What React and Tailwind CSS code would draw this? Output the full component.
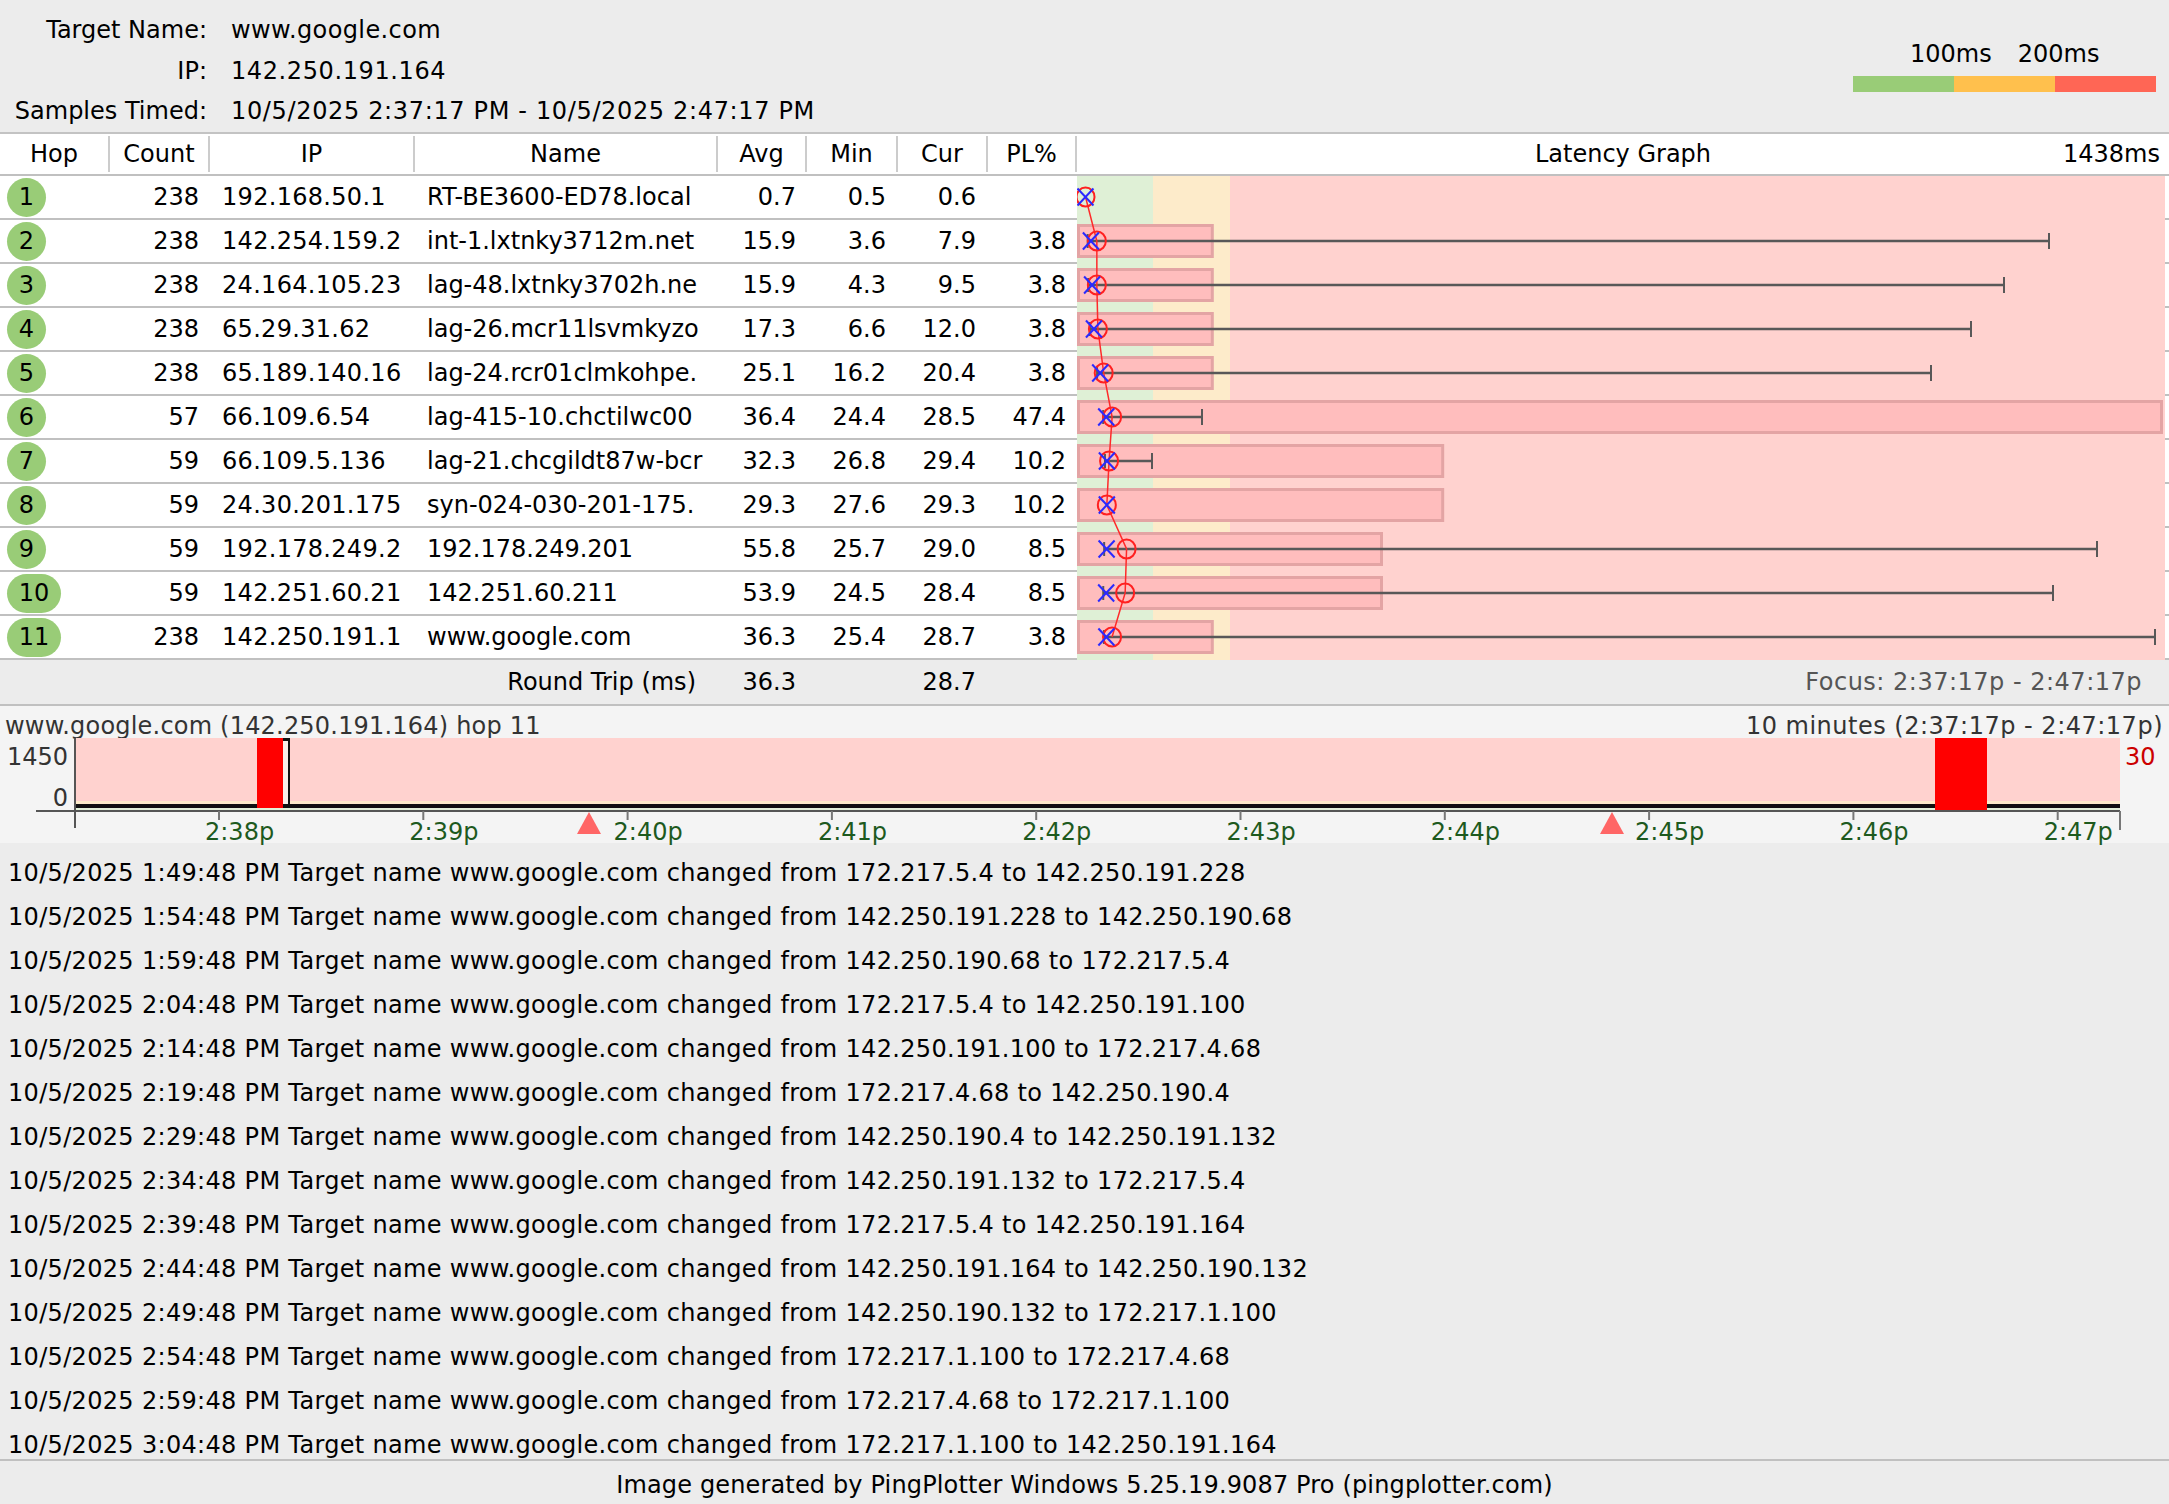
import React from 'react';

const hops = [
  { hop: 1, count: 238, ip: '192.168.50.1', name: 'RT-BE3600-ED78.local', avg: 0.7, min: 0.5, cur: 0.6, pl: null, maxX: null },
  { hop: 2, count: 238, ip: '142.254.159.2', name: 'int-1.lxtnky3712m.net', avg: 15.9, min: 3.6, cur: 7.9, pl: 3.8, maxX: 972 },
  { hop: 3, count: 238, ip: '24.164.105.23', name: 'lag-48.lxtnky3702h.ne', avg: 15.9, min: 4.3, cur: 9.5, pl: 3.8, maxX: 927 },
  { hop: 4, count: 238, ip: '65.29.31.62', name: 'lag-26.mcr11lsvmkyzo', avg: 17.3, min: 6.6, cur: 12.0, pl: 3.8, maxX: 894 },
  { hop: 5, count: 238, ip: '65.189.140.16', name: 'lag-24.rcr01clmkohpe.', avg: 25.1, min: 16.2, cur: 20.4, pl: 3.8, maxX: 854 },
  { hop: 6, count: 57, ip: '66.109.6.54', name: 'lag-415-10.chctilwc00', avg: 36.4, min: 24.4, cur: 28.5, pl: 47.4, maxX: 125 },
  { hop: 7, count: 59, ip: '66.109.5.136', name: 'lag-21.chcgildt87w-bcr', avg: 32.3, min: 26.8, cur: 29.4, pl: 10.2, maxX: 75 },
  { hop: 8, count: 59, ip: '24.30.201.175', name: 'syn-024-030-201-175.', avg: 29.3, min: 27.6, cur: 29.3, pl: 10.2, maxX: null },
  { hop: 9, count: 59, ip: '192.178.249.2', name: '192.178.249.201', avg: 55.8, min: 25.7, cur: 29.0, pl: 8.5, maxX: 1020 },
  { hop: 10, count: 59, ip: '142.251.60.21', name: '142.251.60.211', avg: 53.9, min: 24.5, cur: 28.4, pl: 8.5, maxX: 976 },
  { hop: 11, count: 238, ip: '142.250.191.1', name: 'www.google.com', avg: 36.3, min: 25.4, cur: 28.7, pl: 3.8, maxX: 1078 },
];

const log = [
  ['1:49:48', '172.217.5.4', '142.250.191.228'],
  ['1:54:48', '142.250.191.228', '142.250.190.68'],
  ['1:59:48', '142.250.190.68', '172.217.5.4'],
  ['2:04:48', '172.217.5.4', '142.250.191.100'],
  ['2:14:48', '142.250.191.100', '172.217.4.68'],
  ['2:19:48', '172.217.4.68', '142.250.190.4'],
  ['2:29:48', '142.250.190.4', '142.250.191.132'],
  ['2:34:48', '142.250.191.132', '172.217.5.4'],
  ['2:39:48', '172.217.5.4', '142.250.191.164'],
  ['2:44:48', '142.250.191.164', '142.250.190.132'],
  ['2:49:48', '142.250.190.132', '172.217.1.100'],
  ['2:54:48', '172.217.1.100', '172.217.4.68'],
  ['2:59:48', '172.217.4.68', '172.217.1.100'],
  ['3:04:48', '172.217.1.100', '142.250.191.164'],
];

const cols = 'grid grid-cols-[110px_100px_205px_303px_89px_91px_90px_89px]';
const msX = (ms) => 8 + 0.745 * ms;

const LatencyGraph = () => {
  const pts = hops.map((h, i) => `${msX(h.avg)},${21 + 44 * i}`).join(' ');
  return (
    <svg width="1092" height="484" className="block shrink-0">
      <rect x="0" y="0" width="76" height="484" fill="#dff0d6" />
      <rect x="76" y="0" width="77" height="484" fill="#fdebca" />
      <rect x="153" y="0" width="935" height="484" fill="#ffd2cf" />
      <rect x="1088" y="0" width="4" height="484" fill="#ffffff" />
      {hops.map((h, i) => (
        <rect key={'t' + i} x="1088" y={42 + 44 * i} width="4" height="2" fill="#c0c0c0" />
      ))}
      {hops.map((h, i) => {
        const cy = 21 + 44 * i;
        return (
          <g key={'b' + i}>
            {h.pl && (
              <rect x="1.5" y={cy - 15.5} width={Math.min(36 * h.pl, 1086) - 3} height="31" fill="#ffbdbd" stroke="#e3a4a4" strokeWidth="3" />
            )}
            {h.maxX && (
              <>
                <line x1={msX(h.min)} y1={cy} x2={h.maxX} y2={cy} stroke="#585858" strokeWidth="2.5" />
                <line x1={h.maxX} y1={cy - 8} x2={h.maxX} y2={cy + 8} stroke="#585858" strokeWidth="2" />
                <line x1={msX(h.min)} y1={cy - 7} x2={msX(h.min)} y2={cy + 7} stroke="#585858" strokeWidth="2" />
              </>
            )}
          </g>
        );
      })}
      <polyline points={pts} fill="none" stroke="#ff2a2a" strokeWidth="1.5" />
      {hops.map((h, i) => {
        const cy = 21 + 44 * i;
        const ax = msX(h.avg);
        const cx = msX(h.cur);
        return (
          <g key={'m' + i}>
            <ellipse cx={ax} cy={cy} rx="9" ry="9.5" fill="none" stroke="#ff2020" strokeWidth="2" />
            <line x1={cx - 8} y1={cy - 8.5} x2={cx + 8} y2={cy + 8.5} stroke="#2a2aff" strokeWidth="2" />
            <line x1={cx + 8} y1={cy - 8.5} x2={cx - 8} y2={cy + 8.5} stroke="#2a2aff" strokeWidth="2" />
          </g>
        );
      })}
    </svg>
  );
};

const TimelineGraph = () => {
  const ticks = ['2:38p', '2:39p', '2:40p', '2:41p', '2:42p', '2:43p', '2:44p', '2:45p', '2:46p', '2:47p'];
  return (
    <svg width="2169" height="105" className="block overflow-visible">
      <rect x="75" y="0" width="2045" height="63" fill="#ffd2cf" />
      <rect x="75" y="63" width="2045" height="5" fill="#fdebca" />
      <rect x="75" y="68" width="2045" height="5" fill="#e2f1d9" />
      <rect x="75" y="66" width="2045" height="4" fill="#111111" />
      <rect x="257" y="0" width="26" height="70" fill="#ff0000" />
      <rect x="283" y="3" width="6" height="63" fill="#f8efe9" />
      <rect x="283" y="0" width="7" height="3" fill="#111111" />
      <rect x="288" y="0" width="2" height="68" fill="#111111" />
      <rect x="1935" y="0" width="52" height="72" fill="#ff0000" />
      <line x1="36" y1="73" x2="2120" y2="73" stroke="#555555" strokeWidth="2" />
      <line x1="75" y1="0" x2="75" y2="90" stroke="#555555" strokeWidth="2" />
      <line x1="2120" y1="73" x2="2120" y2="92" stroke="#777777" strokeWidth="2" />
      {ticks.map((t, i) => {
        const x = 219 + 204.3 * i;
        return (
          <g key={t}>
            <line x1={x} y1="73" x2={x} y2="82" stroke="#777777" strokeWidth="2" />
            <text x={x - 14} y="102" fontSize="24" fill="#1e5a1e" fontFamily="DejaVu Sans, sans-serif">{t}</text>
          </g>
        );
      })}
      <polygon points="577,96 589,74 601,96" fill="#ff6666" />
      <polygon points="1600,96 1612,74 1624,96" fill="#ff6666" />
      <text x="68" y="26.5" fontSize="24" textAnchor="end" fill="#333333" fontFamily="DejaVu Sans, sans-serif">1450</text>
      <text x="68" y="67.5" fontSize="24" textAnchor="end" fill="#333333" fontFamily="DejaVu Sans, sans-serif">0</text>
      <text x="2125" y="26.5" fontSize="24" fill="#cc0000" fontFamily="DejaVu Sans, sans-serif">30</text>
    </svg>
  );
};

const App = () => {
  return (
    <div className="w-[2169px] h-[1504px] overflow-hidden bg-[#ececec] text-black text-[24px] [font-family:'DejaVu_Sans',sans-serif]">
      {/* target info + legend */}
      <div className="h-[134px] flex justify-between border-b-2 border-[#c3c3c3]">
        <div className="grid grid-cols-[207px_auto] gap-x-[24px] pt-[10px] leading-[40px] whitespace-nowrap">
          <div className="text-right">Target Name:</div>
          <div className="tracking-[0.4px]">www.google.com</div>
          <div className="text-right">IP:</div>
          <div className="tracking-[0.6px]">142.250.191.164</div>
          <div className="text-right">Samples Timed:</div>
          <div className="tracking-[0.65px]">10/5/2025 2:37:17 PM - 10/5/2025 2:47:17 PM</div>
        </div>
        <div className="w-[303px] mr-[13px] pt-[40px]">
          <div className="flex gap-[26px] pl-[57px] h-[28px] leading-[28px]">
            <span>100ms</span>
            <span>200ms</span>
          </div>
          <div className="flex mt-[8px] h-[16px]">
            <div className="flex-1 bg-[#99cc77]" />
            <div className="flex-1 bg-[#ffc04d]" />
            <div className="flex-1 bg-[#ff6655]" />
          </div>
        </div>
      </div>

      {/* column headers */}
      <div className="grid grid-cols-[110px_100px_205px_303px_89px_91px_90px_89px_1fr] h-[42px] bg-white border-b-2 border-[#c0c0c0] items-center">
        {['Hop', 'Count', 'IP', 'Name', 'Avg', 'Min', 'Cur', 'PL%'].map((c) => (
          <div key={c} className="h-[36px] flex items-center justify-center border-r-2 border-[#cccccc]">{c}</div>
        ))}
        <div className="grid grid-cols-[1fr_auto_1fr] items-center">
          <div />
          <div>Latency Graph</div>
          <div className="text-right pr-[9px]">1438ms</div>
        </div>
      </div>

      {/* hop rows + latency graph */}
      <div className="flex bg-white">
        <div className="w-[1077px] shrink-0">
          {hops.map((h) => (
            <div key={h.hop} className={`${cols} h-[44px] border-b-2 border-[#c0c0c0] items-center whitespace-nowrap`}>
              <div className="pl-[7px]">
                <div className={`${h.hop >= 10 ? 'w-[54px]' : 'w-[39px]'} h-[39px] rounded-full bg-[#99cc77] flex items-center justify-center`}>
                  {h.hop}
                </div>
              </div>
              <div className="text-right pr-[11px]">{h.count}</div>
              <div className="pl-[12px] overflow-hidden tracking-[0.3px]">{h.ip}</div>
              <div className="pl-[12px] overflow-hidden">{h.name}</div>
              <div className="text-right pr-[11px]">{h.avg.toFixed(1)}</div>
              <div className="text-right pr-[12px]">{h.min.toFixed(1)}</div>
              <div className="text-right pr-[12px]">{h.cur.toFixed(1)}</div>
              <div className="text-right pr-[11px]">{h.pl ? h.pl.toFixed(1) : ''}</div>
            </div>
          ))}
        </div>
        <LatencyGraph />
      </div>

      {/* round trip */}
      <div className="flex h-[46px] border-b-2 border-[#c0c0c0] items-center whitespace-nowrap">
        <div className="grid grid-cols-[718px_89px_91px_90px_89px] w-[1077px] shrink-0">
          <div className="text-right pr-[22px]">Round Trip (ms)</div>
          <div className="text-right pr-[11px]">36.3</div>
          <div />
          <div className="text-right pr-[12px]">28.7</div>
          <div />
        </div>
        <div className="flex-1 text-right pr-[27px] text-[#555555] tracking-[0.5px]">Focus: 2:37:17p - 2:47:17p</div>
      </div>

      {/* timeline for final hop */}
      <div className="h-[137px] bg-[#f4f4f4]">
        <div className="flex justify-between h-[32px] pt-[6px] leading-[28px] pl-[5px] pr-[6px] text-[#333333] whitespace-nowrap">
          <span className="tracking-[0.2px]">www.google.com (142.250.191.164) hop 11</span>
          <span className="tracking-[0.5px]">10 minutes (2:37:17p - 2:47:17p)</span>
        </div>
        <TimelineGraph />
      </div>

      {/* event log */}
      <div className="h-[616px] pt-[8px] pl-[8px] overflow-hidden whitespace-nowrap tracking-[0.32px]">
        {log.map(([t, from, to]) => (
          <div key={t} className="leading-[44px]">
            10/5/2025 {t} PM Target name www.google.com changed from {from} to {to}
          </div>
        ))}
      </div>

      <div className="border-t-2 border-[#c0c0c0] h-[45px] pt-[6px] leading-[37px] text-center tracking-[0.15px]">
        Image generated by PingPlotter Windows 5.25.19.9087 Pro (pingplotter.com)
      </div>
    </div>
  );
};

export default App;
